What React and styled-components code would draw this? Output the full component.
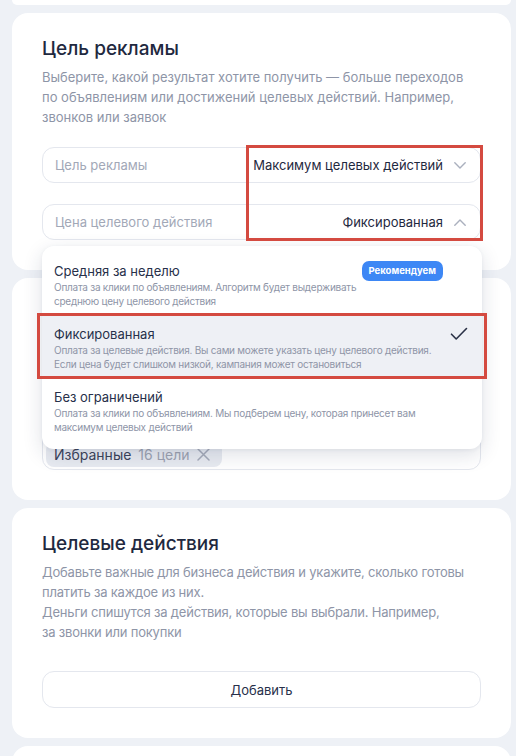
import React from 'react';
import styled, { createGlobalStyle } from 'styled-components';

const GlobalStyle = createGlobalStyle`
  html, body {
    margin: 0;
    padding: 0;
    background: #eef1f6;
  }
  body {
    font-family: Inter, "Noto Sans", Arial, sans-serif;
    color: #1f2940;
    -webkit-font-smoothing: antialiased;
  }
`;

const Page = styled.div`
  display: flex;
  flex-direction: column;
  gap: 8px;
  padding: 0 5px 0 12px;
  height: 756px;
  overflow: hidden;
`;

const Card = styled.section`
  background: #fff;
  border-radius: 16px;
  padding: 24px 30px 30px;
  position: relative;
  flex-shrink: 0;
`;

const CardStub = styled.div`
  background: #fff;
  height: 5px;
  border-radius: 0 0 16px 16px;
  flex-shrink: 0;
`;

const Title = styled.h2`
  margin: 0;
  font-size: 19px;
  line-height: 24px;
  font-weight: 500;
  color: #1f2940;
`;

const Description = styled.p`
  margin: 6px 0 0;
  font-size: 13px;
  line-height: 20px;
  color: #8e95a7;
  letter-spacing: ${p => (p.$tight ? '-0.2px' : '0')};
`;

const Fields = styled.div`
  margin-top: 20px;
  display: flex;
  flex-direction: column;
  gap: 21px;
  position: relative;
`;

const FieldWrap = styled.div`
  position: relative;
`;

const Field = styled.div`
  height: 36px;
  box-sizing: border-box;
  border: 1px solid #e4e7ee;
  border-radius: 12px;
  display: flex;
  align-items: center;
  padding: 0 14px 0 12px;
  font-size: 13px;
`;

const Label = styled.span`
  color: #a2a8b7;
  flex: 1;
`;

const Value = styled.span`
  color: #1f2940;
  margin-right: 11px;
`;

const Chevron = ({ up }) => (
  <svg width="12" height="7" viewBox="0 0 12 7" fill="none">
    <path
      d={up ? 'M0.8 6.2 L6 1 L11.2 6.2' : 'M0.8 0.8 L6 6 L11.2 0.8'}
      stroke="#aab0be"
      strokeWidth="1.4"
      strokeLinecap="round"
      strokeLinejoin="round"
    />
  </svg>
);

const Menu = styled.div`
  position: absolute;
  left: 0;
  right: -1px;
  top: calc(100% + 6px);
  z-index: 5;
  background: #fff;
  border-radius: 12px;
  box-shadow: 0 6px 20px rgba(30, 45, 80, 0.14), 0 1px 4px rgba(30, 45, 80, 0.06);
  padding: 7px 0 7px;
`;

const Option = styled.div`
  position: relative;
  padding: 9px 12px 8px;
  height: 63px;
  box-sizing: border-box;
  background: ${p => (p.$selected ? '#eef0f5' : 'transparent')};
`;

const OptionHead = styled.div`
  display: flex;
  align-items: center;
  justify-content: space-between;
  height: 18px;
`;

const OptionTitle = styled.span`
  font-size: 13px;
  line-height: 18px;
  color: #27304a;
`;

const OptionText = styled.div`
  margin-top: 1px;
  font-size: 10px;
  letter-spacing: -0.25px;
  line-height: 13.5px;
  color: #8e95a7;
`;

const Badge = styled.span`
  background: #3d87f5;
  color: #fff;
  font-size: 9.5px;
  font-weight: 700;
  line-height: 20px;
  padding: 0 7px;
  border-radius: 7px;
  margin-right: 27px;
`;

const Check = () => (
  <svg width="18" height="14" viewBox="0 0 18 14" fill="none" style={{ marginRight: 2 }}>
    <path d="M1.5 7.2 L6.2 12 L16.5 1.5" stroke="#2a3146" strokeWidth="1.6" strokeLinecap="round" strokeLinejoin="round" />
  </svg>
);

const Highlight = styled.div`
  position: absolute;
  pointer-events: none;
  border: 3px solid #d44a40;
  box-sizing: border-box;
  z-index: 6;
`;

const TagBox = styled.div`
  margin-top: 20px;
  border: 1px solid #e4e7ee;
  border-radius: 12px;
  padding: 10px 3px 2px;
  box-sizing: border-box;
  height: 78px;
  display: flex;
  flex-direction: column;
  justify-content: space-between;
`;

const TagLabel = styled.span`
  font-size: 13px;
  color: #a2a8b7;
  padding-left: 9px;
`;

const Tag = styled.span`
  align-self: flex-start;
  display: inline-flex;
  align-items: center;
  gap: 7px;
  height: 25px;
  padding: 0 12px 0 8px;
  background: #e8ebf1;
  border-radius: 8px;
  font-size: 14px;
  color: #9da3b1;
`;

const TagName = styled.span`
  color: #3b4359;
`;

const Cross = () => (
  <svg width="13" height="13" viewBox="0 0 13 13" fill="none">
    <path d="M1 1 L12 12 M12 1 L1 12" stroke="#a5abb9" strokeWidth="1.5" strokeLinecap="round" />
  </svg>
);

const AddButton = styled.button`
  margin-top: 29px;
  width: 100%;
  height: 37px;
  border: 1px solid #e4e7ee;
  border-radius: 12px;
  background: #fff;
  font-family: inherit;
  font-size: 13px;
  color: #27304a;
  cursor: pointer;
`;

const options = [
  {
    title: 'Средняя за неделю',
    text: ['Оплата за клики по объявлениям. Алгоритм будет выдерживать', 'среднюю цену целевого действия'],
    badge: 'Рекомендуем',
  },
  {
    title: 'Фиксированная',
    text: ['Оплата за целевые действия. Вы сами можете указать цену целевого действия.', 'Если цена будет слишком низкой, кампания может остановиться'],
    selected: true,
  },
  {
    title: 'Без ограничений',
    text: ['Оплата за клики по объявлениям. Мы подберем цену, которая принесет вам', 'максимум целевых действий'],
  },
];

export default function App() {
  return (
    <>
      <GlobalStyle />
      <Page>
        <CardStub />

        <Card style={{ zIndex: 2 }}>
          <Title>Цель рекламы</Title>
          <Description>
            Выберите, какой результат хотите получить — больше переходов
            <br />
            по объявлениям или достижений целевых действий. Например,
            <br />
            звонков или заявок
          </Description>
          <Fields>
            <Field>
              <Label>Цель рекламы</Label>
              <Value>Максимум целевых действий</Value>
              <Chevron />
            </Field>
            <FieldWrap>
              <Field>
                <Label>Цена целевого действия</Label>
                <Value>Фиксированная</Value>
                <Chevron up />
              </Field>
              <Menu>
                {options.map(o => (
                  <Option key={o.title} $selected={o.selected}>
                    <OptionHead>
                      <OptionTitle>{o.title}</OptionTitle>
                      {o.badge && <Badge>{o.badge}</Badge>}
                      {o.selected && <Check />}
                    </OptionHead>
                    <OptionText>
                      {o.text[0]}
                      <br />
                      {o.text[1]}
                    </OptionText>
                    {o.selected && <Highlight style={{ left: -5, top: -3, right: -5, bottom: 0 }} />}
                  </Option>
                ))}
              </Menu>
            </FieldWrap>
            <Highlight style={{ left: 204, top: -2, width: 237, height: 96 }} />
          </Fields>
        </Card>

        <Card>
          <Title>Цели</Title>
          <Description>
            Выберите цели Метрики, которые важны для бизнеса,
            <br />
            и система будет оптимизировать показы
          </Description>
          <TagBox>
            <TagLabel>Цели Метрики</TagLabel>
            <Tag>
              <TagName>Избранные</TagName>
              16 цели
              <Cross />
            </Tag>
          </TagBox>
        </Card>

        <Card>
          <Title>Целевые действия</Title>
          <Description $tight>
            Добавьте важные для бизнеса действия и укажите, сколько готовы
            <br />
            платить за каждое из них.
            <br />
            Деньги спишутся за действия, которые вы выбрали. Например,
            <br />
            за звонки или покупки
          </Description>
          <AddButton>Добавить</AddButton>
        </Card>

        <Card style={{ height: 60 }} />
      </Page>
    </>
  );
}
